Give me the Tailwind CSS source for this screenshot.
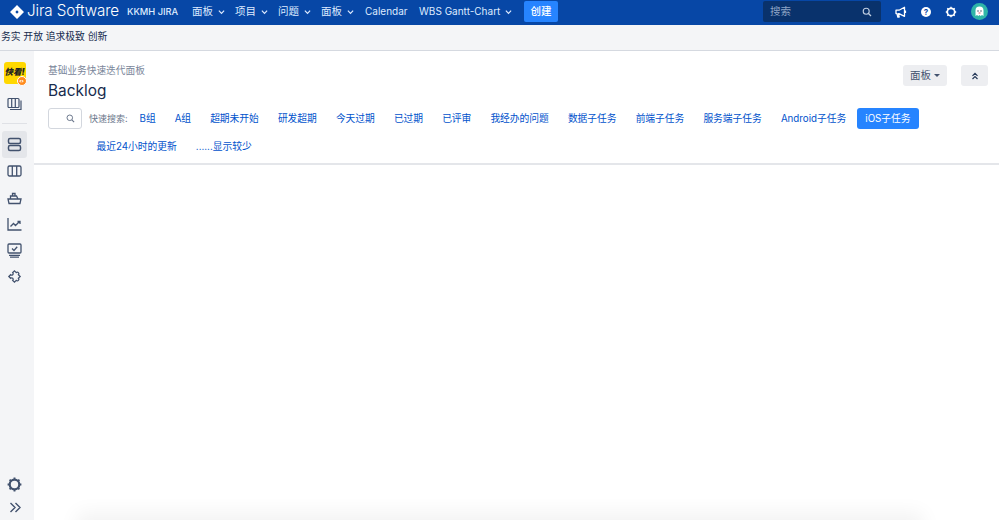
<!DOCTYPE html>
<html lang="zh">
<head>
  <meta charset="UTF-8">
  <title>Backlog</title>
  <script src="https://cdn.jsdelivr.net/npm/@tailwindcss/browser@4"></script>
</head>
<body class="h-[520px] overflow-hidden bg-white font-['Inter','Noto_Sans_CJK_SC',sans-serif] text-[10px]">
  <!-- top nav -->
  <header class="flex h-[25px] items-center bg-[#0747a6] pb-[2px] text-[#deebff]">
    <svg class="ml-[10px] h-[14px] w-[14px]" viewBox="0 0 14 14"><path fill="#fff" fill-rule="evenodd" d="M7 0 14 7 7 14 0 7ZM7 5.300 5.300 7 7 8.700 8.700 7Z"/></svg>
    <span class="ml-[3px] w-[100px] text-[15.200px] font-light tracking-[-0.1px] text-white">Jira Software</span>
    <span class="w-[65px] text-[9.300px] font-medium">KKMH JIRA</span>
    <nav class="flex items-center">
      <span class="flex w-[43px] items-center text-[10.500px]">面板<svg class="ml-[5px] h-[6px] w-[7px]" viewBox="0 0 8 6"><path d="M1 1.500 4 4.500 7 1.500" fill="none" stroke="currentColor" stroke-width="1.400"/></svg></span>
      <span class="flex w-[43px] items-center text-[10.500px]">项目<svg class="ml-[5px] h-[6px] w-[7px]" viewBox="0 0 8 6"><path d="M1 1.500 4 4.500 7 1.500" fill="none" stroke="currentColor" stroke-width="1.400"/></svg></span>
      <span class="flex w-[43px] items-center text-[10.500px]">问题<svg class="ml-[5px] h-[6px] w-[7px]" viewBox="0 0 8 6"><path d="M1 1.500 4 4.500 7 1.500" fill="none" stroke="currentColor" stroke-width="1.400"/></svg></span>
      <span class="flex w-[43px] items-center text-[10.500px]">面板<svg class="ml-[5px] h-[6px] w-[7px]" viewBox="0 0 8 6"><path d="M1 1.500 4 4.500 7 1.500" fill="none" stroke="currentColor" stroke-width="1.400"/></svg></span>
      <span class="w-[55px] pl-px">Calendar</span>
      <span class="flex w-[105px] items-center">WBS Gantt-Chart<svg class="ml-[5px] h-[6px] w-[7px]" viewBox="0 0 8 6"><path d="M1 1.500 4 4.500 7 1.500" fill="none" stroke="currentColor" stroke-width="1.400"/></svg></span>
      <span class="flex h-[21px] w-[34px] items-center justify-center rounded-[2px] bg-[#2684ff] text-[10.500px] font-medium text-white">创建</span>
    </nav>
    <div class="ml-auto flex items-center">
      <div class="flex h-[21px] w-[118px] items-center justify-between rounded-[2px] bg-[#09326c] pl-[7px] pr-[9px] text-[10.500px] text-[#8da3c4]">
        <span>搜索</span>
        <svg class="h-[10px] w-[10px]" viewBox="0 0 10 10"><circle cx="4.200" cy="4.200" r="3" fill="none" stroke="#c1cfe2" stroke-width="1.100"/><path d="M6.500 6.500 9 9" stroke="#c1cfe2" stroke-width="1.300"/></svg>
      </div>
      <svg class="ml-[14px] h-[12px] w-[12px]" viewBox="0 0 12 12"><path d="M1 4.200H4L9.500 1.200V10.300L4 7.600H3.400L4.200 11H2.800L2 7.600H1Z" fill="none" stroke="#fff" stroke-width="1.300" stroke-linejoin="round"/><path d="M10.500 4.500V7" stroke="#fff" stroke-width="1.200"/></svg>
      <span class="ml-[14px] flex h-[10px] w-[10px] items-center justify-center rounded-full bg-white text-[8px] leading-none font-bold text-[#0747a6]">?</span>
      <svg class="ml-[14px] h-[12px] w-[12px]" viewBox="0 0 12 12"><circle cx="6" cy="6" r="3.700" fill="none" stroke="#fff" stroke-width="1.700"/><path d="M6 .8V2.600M6 9.400V11.200M.8 6H2.600M9.400 6H11.200M2.300 2.300 3.600 3.600M8.400 8.400 9.700 9.700M2.300 9.700 3.600 8.400M8.400 3.600 9.700 2.300" stroke="#fff" stroke-width="1.400"/></svg>
      <svg class="mr-[11px] ml-[14px] h-[17px] w-[17px]" viewBox="0 0 17 17"><circle cx="8.500" cy="8.500" r="8.500" fill="#2fb5a8"/><path d="M4.500 13V7.500A4 4 0 0 1 12.500 7.500V13L11 12 9.700 13 8.500 12 7.300 13 6 12Z" fill="#fff"/><circle cx="7" cy="8" r=".7" fill="#253858"/><circle cx="10" cy="8" r=".7" fill="#253858"/><path d="M7.500 9.500H9.500V10.500H7.500Z" fill="#e0566a"/></svg>
    </div>
  </header>

  <!-- announcement banner -->
  <div class="flex h-[26px] items-center border-b border-[#d5d9e0] bg-[#f4f5f7] pl-px text-[9.800px] text-[#172b4d]">务实 开放 追求极致 创新</div>

  <div class="relative flex h-[469px] overflow-hidden">
    <!-- project sidebar -->
    <aside class="flex w-[34px] shrink-0 flex-col items-center bg-[#f4f5f7] pt-[11px] pr-[5px]">
      <div class="relative h-[22px] w-[22px] rounded-[3px] bg-[#ffd800] text-center text-[8.500px] leading-[21px] font-black whitespace-nowrap text-[#222] italic">
        快看!
        <span class="absolute top-[14px] left-[13px] flex h-[10px] w-[10px] items-center justify-center rounded-full border border-white bg-[#ff8b1f] text-[5px] leading-none text-white not-italic">‹›</span>
      </div>
      <svg class="mt-[13px] h-[15px] w-[15px]" viewBox="0 0 15 15" fill="none" stroke="#42526e" stroke-width="1.200"><rect x="1" y="1.500" width="11" height="9" rx="1"/><path d="M4.700 1.500V10.500M8.300 1.500V10.500M14 3.500V12.500H3"/></svg>
      <div class="mt-[11px] h-px w-[25px] bg-[#dfe1e6]"></div>
      <div class="mt-[7px] flex h-[27px] w-[25px] items-center justify-center rounded-[3px] bg-[#e4e6ea]">
        <svg class="h-[15px] w-[15px]" viewBox="0 0 15 15" fill="none" stroke="#42526e" stroke-width="1.500"><rect x="1.500" y="1.500" width="12" height="5" rx="1.500"/><rect x="1.500" y="8.500" width="12" height="5" rx="1.500"/></svg>
      </div>
      <svg class="mt-[6px] h-[14px] w-[15px]" viewBox="0 0 15 14" fill="none" stroke="#42526e" stroke-width="1.300"><rect x="1" y="2" width="13" height="10" rx="1.500"/><path d="M5.300 2V12M9.700 2V12"/></svg>
      <svg class="mt-[13px] h-[14px] w-[15px]" viewBox="0 0 15 14" fill="none" stroke="#42526e" stroke-width="1.300"><path d="M1 8H14L13 12.500H2ZM3.500 8V5H9.500L11 8M5.500 5V2.500H8V5"/></svg>
      <svg class="mt-[12px] h-[14px] w-[15px]" viewBox="0 0 15 14" fill="none" stroke="#42526e" stroke-width="1.300"><path d="M1 1V13H14.500"/><path d="M3.500 9.500 6.500 6.500 8.500 8.500 12.500 4.500M10.500 4.500H13V7"/></svg>
      <svg class="mt-[12px] h-[15px] w-[15px]" viewBox="0 0 15 15" fill="none" stroke="#42526e" stroke-width="1.300"><rect x="1" y="1" width="13" height="9" rx="1"/><path d="M5 5.500 7 7.500 10.200 3.800M2 12.300H13M3 14.200H12"/></svg>
      <svg class="mt-[11px] h-[15px] w-[15px]" viewBox="0 0 15 15" fill="none" stroke="#42526e" stroke-width="1.300"><path transform="rotate(45 7.500 7.500)" d="M3.500 3.500H6A1.500 1.500 0 1 1 9 3.500H11.500V6A1.500 1.500 0 1 1 11.500 9V11.500H9A1.500 1.500 0 1 0 6 11.500H3.500V9A1.500 1.500 0 1 0 3.500 6Z"/></svg>
      <svg class="mt-auto h-[15px] w-[15px]" viewBox="0 0 15 15"><circle cx="7.500" cy="7.500" r="4.800" fill="none" stroke="#42526e" stroke-width="2.200"/><path d="M7.500 .6V3M7.500 12V14.400M.6 7.500H3M12 7.500H14.400M2.600 2.600 4.300 4.300M10.700 10.700 12.400 12.400M2.600 12.400 4.300 10.700M10.700 4.300 12.400 2.600" stroke="#42526e" stroke-width="1.900"/></svg>
      <svg class="mt-[10px] mb-[7px] h-[11px] w-[12px]" viewBox="0 0 12 11" fill="none" stroke="#42526e" stroke-width="1.400"><path d="M1.500 1 6 5.500 1.500 10M6.500 1 11 5.500 6.500 10"/></svg>
    </aside>

    <!-- backlog header -->
    <main class="min-w-0 flex-1">
      <div class="h-[114px] border-b-2 border-[#e4e6ea] pt-[13px] pr-[11px] pl-[14px]">
        <div class="flex justify-between">
          <div>
            <p class="text-[9.700px] leading-[14px] text-[#7a869a]">基础业务快速迭代面板</p>
            <h1 class="mt-[3px] text-[15.400px] leading-[20px] text-[#172b4d]">Backlog</h1>
          </div>
          <div class="mt-px flex items-start gap-[14px]">
            <button class="flex h-[21px] w-[44px] items-center justify-center rounded-[3px] bg-[#edeef1] text-[10.500px] text-[#42526e]">面板<span class="ml-[3px] h-0 w-0 border-x-[3px] border-t-[3px] border-x-transparent border-t-[#42526e]"></span></button>
            <button class="flex h-[21px] w-[27px] items-center justify-center rounded-[3px] bg-[#edeef1]"><svg class="h-[8px] w-[8px]" viewBox="0 0 8 8" fill="none" stroke="#253858" stroke-width="1.200"><path d="M1.500 3.800 4 1.300 6.500 3.800M1.500 7 4 4.500 6.500 7"/></svg></button>
          </div>
        </div>
        <div class="mt-[7px] flex items-start">
          <div class="flex h-[21px] w-[34px] shrink-0 items-center justify-end rounded-[3px] border border-[#d3d7de] pr-[6px]">
            <svg class="h-[9px] w-[9px]" viewBox="0 0 10 10"><circle cx="4.200" cy="4.200" r="3.100" fill="none" stroke="#6b778c" stroke-width="1.100"/><path d="M6.500 6.500 9 9" stroke="#6b778c" stroke-width="1.300"/></svg>
          </div>
          <div class="ml-[6.500px] flex flex-wrap gap-x-[3px] gap-y-[7px] text-[9.750px] leading-[21px] text-[#0052cc]">
            <span class="w-[40px] pl-[.5px] text-[9px] whitespace-nowrap text-[#6b778c]">快速搜索:</span>
            <a class="rounded-[3px] px-2">B组</a>
            <a class="rounded-[3px] px-2">A组</a>
            <a class="rounded-[3px] px-2">超期未开始</a>
            <a class="rounded-[3px] px-2">研发超期</a>
            <a class="rounded-[3px] px-2">今天过期</a>
            <a class="rounded-[3px] px-2">已过期</a>
            <a class="rounded-[3px] px-2">已评审</a>
            <a class="rounded-[3px] px-2">我经办的问题</a>
            <a class="rounded-[3px] px-2">数据子任务</a>
            <a class="rounded-[3px] px-2">前端子任务</a>
            <a class="rounded-[3px] px-2">服务端子任务</a>
            <a class="rounded-[3px] px-2">Android子任务</a>
            <a class="rounded-[3px] bg-[#2684ff] px-2 text-white">iOS子任务</a>
            <a class="rounded-[3px] px-2">最近24小时的更新</a>
            <a class="rounded-[3px] px-2">......显示较少</a>
          </div>
        </div>
      </div>
    </main>
    <!-- faint shadow of the card under the fold -->
    <div class="absolute top-[470px] left-[85px] h-[20px] w-[830px] bg-[#f2f2f2] shadow-[0_0_20px_8px_#f2f2f2]"></div>
  </div>
</body>
</html>
